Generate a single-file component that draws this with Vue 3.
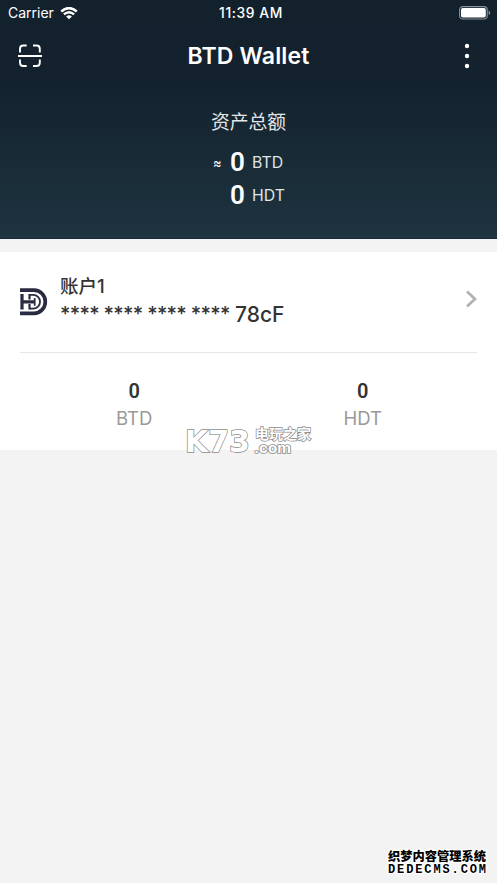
<script setup>
const balances = [
  { amount: '0', unit: 'BTD' },
  { amount: '0', unit: 'HDT' },
]
</script>

<template>
  <div class="screen">
    <header class="hero">
      <div class="status">
        <div class="carrier">
          <span>Carrier</span>
          <svg width="18" height="13" viewBox="0 0 18 13" fill="none" stroke="#fff">
            <path d="M1.2 4.5Q9 -2.3 16.8 4.5" stroke-width="2.5" />
            <path d="M3.9 7.4Q9 3 14.1 7.4" stroke-width="2.3" />
            <path d="M9 12.3L6.1 9.5Q9 7.2 11.9 9.5Z" fill="#fff" stroke="none" />
          </svg>
        </div>
        <span class="time">11:39 AM</span>
        <svg class="battery" width="32" height="14" viewBox="0 0 32 14">
          <rect x=".6" y=".6" width="27.6" height="12.4" rx="3.2" fill="none" stroke="#89929a" stroke-width="1.1" />
          <rect x="2" y="2" width="24.8" height="9.6" rx="1.8" fill="#fff" />
          <path d="M29.6 4.6Q31.2 5 31.2 6.8T29.6 9Z" fill="#89929a" />
        </svg>
      </div>

      <div class="nav">
        <svg class="scan" width="24" height="24" viewBox="0 0 24 24" fill="none" stroke="#fff" stroke-width="1.9">
          <path d="M2 8.5V4.8Q2 1.5 5.3 1.5H8.7M15 1.5H18.5Q21.8 1.5 21.8 4.8V8.5M21.8 15.5V18.7Q21.8 22 18.5 22H15M8.7 22H5.3Q2 22 2 18.7V15.5M0 12H24" />
        </svg>
        <h1>BTD Wallet</h1>
        <svg class="more" width="6" height="26" viewBox="0 0 6 26" fill="#fff">
          <circle cx="3" cy="3" r="2.2" />
          <circle cx="3" cy="13" r="2.2" />
          <circle cx="3" cy="23" r="2.2" />
        </svg>
      </div>

      <div class="total">
        <div class="total-label">资产总额</div>
        <div v-for="(b, i) in balances" :key="b.unit" class="total-row">
          <span class="approx">{{ i === 0 ? '≈' : '' }}</span>
          <strong>{{ b.amount }}</strong>
          <span class="unit">{{ b.unit }}</span>
        </div>
      </div>
    </header>

    <section class="card">
      <div class="account">
        <svg class="logo" width="28" height="28" viewBox="0 0 28 28" fill="none" stroke="#292b40">
          <path d="M0 2.1H14A11.3 11.6 0 0 1 14 25.3H0" stroke-width="3.7" />
          <path d="M2 6V21.5M2 13.8H15" stroke-width="3.2" />
          <path d="M9.5 6V11.5M9.5 16V21.5" stroke-width="2.2" />
          <path d="M10 6.9H13.2A6.8 6.8 0 0 1 13.2 20.6H10" stroke-width="1.8" />
          <path d="M14.7 10V17.8" stroke-width="1.7" />
        </svg>
        <div class="account-text">
          <div class="name">账户1</div>
          <div class="address"><span class="mask">**** **** **** ****</span><span class="tail">78cF</span></div>
        </div>
        <svg class="chevron" width="12" height="18" viewBox="0 0 12 18" fill="none" stroke="#b1b1b1" stroke-width="2.7">
          <path d="M2 1.5L10 9L2 16.5" />
        </svg>
      </div>
      <div class="assets">
        <div v-for="b in balances" :key="b.unit" class="asset">
          <strong>{{ b.amount }}</strong>
          <span>{{ b.unit }}</span>
        </div>
      </div>
    </section>

    <svg class="mark-site" width="132" height="36" viewBox="0 0 132 36">
      <g fill="#fff" stroke="#8b8b8b" stroke-width="1.5" paint-order="stroke" font-weight="bold">
        <text class="wide" x="-1" y="28" font-size="31" textLength="65" lengthAdjust="spacingAndGlyphs">K73</text>
        <text x="69" y="14.5" font-size="14" textLength="56" lengthAdjust="spacingAndGlyphs">电玩之家</text>
        <text x="68" y="28.5" font-size="13" textLength="37" lengthAdjust="spacingAndGlyphs">.com</text>
      </g>
    </svg>
    <svg class="mark-cms" width="104" height="30" viewBox="0 0 104 30">
      <g fill="#000" stroke="#fff" stroke-width="2.5" stroke-linejoin="round" paint-order="stroke" font-weight="bold">
        <text class="heavy" x="3" y="13.5" font-size="12.5" textLength="98" lengthAdjust="spacingAndGlyphs">织梦内容管理系统</text>
        <text class="mono" x="3" y="25.5" font-size="12" textLength="98">DEDECMS.COM</text>
      </g>
    </svg>
  </div>
</template>

<style>
body { margin: 0; background: #f3f3f3; }
</style>

<style scoped>
.screen {
  position: relative;
  width: 497px;
  height: 883px;
  overflow: hidden;
  background: #f3f3f3;
  font-family: Inter, "Noto Sans CJK SC", sans-serif;
  color: #333;
}
.hero {
  box-sizing: border-box;
  height: 239px;
  background: linear-gradient(#13212d 0, #13222e 35%, #1e3440 100%);
  border-bottom: 1px solid #172b37;
  color: #fff;
}
.status {
  display: grid;
  grid-template-columns: 1fr auto 1fr;
  align-items: center;
  height: 26px;
  padding: 0 6px 0 8px;
  font-size: 14px;
  line-height: 26px;
}
.carrier { display: flex; align-items: center; gap: 6px; }
.time { font-weight: 500; font-size: 13.8px; letter-spacing: .6px; padding-left: 3px; }
.battery { justify-self: end; }
.nav {
  display: grid;
  grid-template-columns: 1fr auto 1fr;
  align-items: center;
  height: 60px;
  padding: 0 27px 0 18px;
}
h1 { margin: 0; padding-left: 9px; font-size: 23px; line-height: 30px; font-weight: 600; letter-spacing: .15px; }
.more { justify-self: end; }
.total { padding-top: 22px; }
.total-label { box-sizing: border-box; height: 38px; line-height: 30px; font-size: 18.8px; text-align: center; color: #e2e6e9; }
.total-row { display: flex; align-items: center; height: 33px; padding-left: 213px; }
.approx { width: 17px; font-size: 13px; }
.total-row strong { width: 22px; line-height: 28px; padding-bottom: 1px; font-family: Roboto, sans-serif; font-size: 26px; font-weight: 600; }
.unit { font-size: 15.8px; color: #dfe4e7; }
.card { margin-top: 13px; padding: 0 20px; height: 198px; background: #fff; }
.account {
  box-sizing: border-box;
  display: flex;
  align-items: flex-start;
  height: 101px;
  border-bottom: 1px solid #e6e6e6;
}
.logo { margin-top: 36px; }
.account-text { flex: 1; padding: 20px 0 0 12px; }
.name { font-size: 18.5px; line-height: 28px; height: 28px; font-weight: 500; }
.address { display: flex; align-items: center; height: 28px; font-size: 20px; font-weight: 500; }
.mask { width: 175px; white-space: nowrap; letter-spacing: -.68px; }
.tail { font-size: 21px; }
.chevron { margin-top: 38px; }
.assets { display: grid; grid-template-columns: 1fr 1fr; padding-top: 25px; }
.asset { display: flex; flex-direction: column; align-items: center; }
.asset strong { font-family: Roboto, sans-serif; font-size: 20px; line-height: 26px; font-weight: 600; }
.asset span { font-size: 18.5px; line-height: 28px; color: #999; }
.mark-site { position: absolute; left: 186px; top: 424px; }
.mark-cms { position: absolute; left: 385px; top: 847px; }
.wide { font-family: "DejaVu Sans", sans-serif; font-weight: bold; }
.heavy { font-weight: 900; }
.mono { font-family: "Liberation Mono", monospace; }
</style>
